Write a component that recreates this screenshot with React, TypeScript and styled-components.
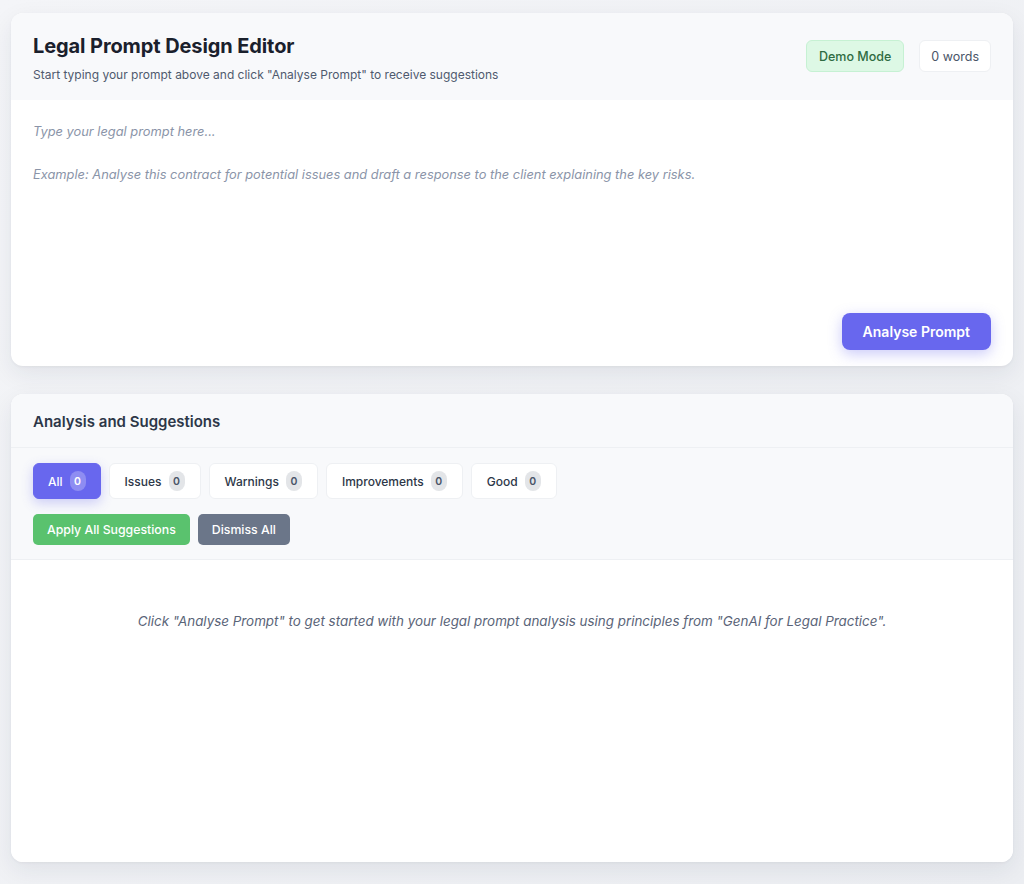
import React from "react";
import styled, { createGlobalStyle } from "styled-components";

const Global = createGlobalStyle`
  html, body { margin: 0; padding: 0; }
  body {
    background: linear-gradient(135deg, #f4f5f8 0%, #eceef2 100%);
    font-family: Inter, "Noto Sans", sans-serif;
    color: #1f2937;
    min-height: 884px;
  }
  * { box-sizing: border-box; }
`;

const Page = styled.div`
  padding: 13px 11px 22px 11px;
  display: flex;
  flex-direction: column;
  gap: 28px;
`;

const Card = styled.section<{ $h: number }>`
  background: #ffffff;
  border-radius: 12px;
  box-shadow: 0 8px 24px rgba(30, 41, 59, 0.08), 0 1px 3px rgba(30, 41, 59, 0.05);
  overflow: hidden;
  display: flex;
  flex-direction: column;
  height: ${(p) => p.$h}px;
`;

const EditorHeader = styled.header`
  background: #f8f9fb;
  height: 87px;
  padding: 20px 22px 0 22px;
  display: flex;
  justify-content: space-between;
  align-items: flex-start;
`;

const TitleBlock = styled.div`
  display: flex;
  flex-direction: column;
`;

const Title = styled.h1`
  margin: 0;
  font-size: 20px;
  font-weight: 700;
  color: #1a202c;
  line-height: 26px;
  letter-spacing: -0.1px;
`;

const Subtitle = styled.p`
  margin: 8px 0 0 0;
  font-size: 12px;
  color: #4f5a6e;
  line-height: 16px;
`;

const Badges = styled.div`
  display: flex;
  gap: 15px;
  margin-top: 7px;
`;

const Badge = styled.span<{ $variant: "demo" | "plain" }>`
  height: 32px;
  padding: 0 ${(p) => (p.$variant === "demo" ? 12 : 11)}px;
  display: inline-flex;
  align-items: center;
  border-radius: 6px;
  font-size: 12.5px;
  border: 1px solid ${(p) => (p.$variant === "demo" ? "#c6f1d3" : "#eef0f3")};
  background: ${(p) => (p.$variant === "demo" ? "#ddf8e5" : "#ffffff")};
  color: ${(p) => (p.$variant === "demo" ? "#2f6b42" : "#4a5568")};
  font-weight: ${(p) => (p.$variant === "demo" ? 500 : 400)};
`;

const EditorBody = styled.div`
  flex: 1;
  display: flex;
  flex-direction: column;
  padding: 21px 22px 16px 22px;
`;

const PromptArea = styled.textarea`
  flex: 1;
  border: none;
  outline: none;
  resize: none;
  padding: 0;
  font-family: Inter, "Noto Sans", sans-serif;
  font-size: 12.85px;
  line-height: 21.5px;
  color: #1f2937;
  background: transparent;
  &::placeholder {
    color: #8a94a8;
    font-style: italic;
  }
`;

const EditorFooter = styled.div`
  display: flex;
  justify-content: flex-end;
`;

const PrimaryButton = styled.button`
  height: 37px;
  padding: 0 21px;
  border: none;
  border-radius: 8px;
  background: #6867ee;
  color: #ffffff;
  font-family: Inter, "Noto Sans", sans-serif;
  font-size: 14px;
  font-weight: 600;
  box-shadow: 0 4px 14px rgba(104, 103, 238, 0.35);
  cursor: pointer;
`;

const AnalysisHeader = styled.header`
  background: #f8f9fb;
  height: 54px;
  padding: 2px 22px 0 22px;
  display: flex;
  align-items: center;
  border-bottom: 1px solid #eef0f3;
`;

const SectionTitle = styled.h2`
  margin: 0;
  font-size: 15px;
  font-weight: 600;
  color: #2d3748;
`;

const Controls = styled.div`
  background: #f8f9fb;
  padding: 15px 22px 14px 22px;
  border-bottom: 1px solid #eef0f3;
  display: flex;
  flex-direction: column;
  gap: 15px;
`;

const Tabs = styled.div`
  display: flex;
  gap: 8px;
`;

const Tab = styled.button<{ $active?: boolean }>`
  height: 36px;
  padding: 0 ${(p) => (p.$active ? 14 : 15)}px;
  display: inline-flex;
  align-items: center;
  gap: 7px;
  border-radius: 6px;
  border: 1px solid ${(p) => (p.$active ? "#6867ee" : "#eef0f3")};
  background: ${(p) => (p.$active ? "#6867ee" : "#ffffff")};
  color: ${(p) => (p.$active ? "#ffffff" : "#2d3748")};
  font-family: Inter, "Noto Sans", sans-serif;
  font-size: 12px;
  font-weight: 500;
  box-shadow: ${(p) => (p.$active ? "0 4px 12px rgba(104,103,238,0.3)" : "none")};
  cursor: pointer;
`;

const Count = styled.span<{ $active?: boolean }>`
  min-width: 16px;
  height: 20px;
  padding: 0 4px;
  border-radius: 10px;
  display: inline-flex;
  align-items: center;
  justify-content: center;
  font-size: 10.5px;
  font-weight: 600;
  background: ${(p) => (p.$active ? "rgba(255,255,255,0.25)" : "#e3e5e8")};
  color: ${(p) => (p.$active ? "#ffffff" : "#4a5568")};
`;

const Actions = styled.div`
  display: flex;
  gap: 8px;
`;

const ActionButton = styled.button<{ $tone: "green" | "gray" }>`
  height: 31px;
  padding: 0 14px;
  border: none;
  border-radius: 5px;
  background: ${(p) => (p.$tone === "green" ? "#5ac26e" : "#6b7689")};
  color: #ffffff;
  font-family: Inter, "Noto Sans", sans-serif;
  font-size: 12.3px;
  font-weight: 500;
  cursor: pointer;
`;

const Results = styled.div`
  flex: 1;
  background: #ffffff;
  padding: 52px 22px;
  display: flex;
  justify-content: center;
`;

const EmptyText = styled.p`
  margin: 0;
  font-size: 13.4px;
  font-style: italic;
  color: #5a6478;
  line-height: 18px;
`;

const tabs = [
  { label: "All", count: 0, active: true },
  { label: "Issues", count: 0 },
  { label: "Warnings", count: 0 },
  { label: "Improvements", count: 0 },
  { label: "Good", count: 0 },
];

export default function App() {
  return (
    <>
      <Global />
      <Page>
        <Card $h={353}>
          <EditorHeader>
            <TitleBlock>
              <Title>Legal Prompt Design Editor</Title>
              <Subtitle>
                Start typing your prompt above and click "Analyse Prompt" to receive suggestions
              </Subtitle>
            </TitleBlock>
            <Badges>
              <Badge $variant="demo">Demo Mode</Badge>
              <Badge $variant="plain">0 words</Badge>
            </Badges>
          </EditorHeader>
          <EditorBody>
            <PromptArea
              placeholder={
                "Type your legal prompt here...\n\nExample: Analyse this contract for potential issues and draft a response to the client explaining the key risks."
              }
            />
            <EditorFooter>
              <PrimaryButton>Analyse Prompt</PrimaryButton>
            </EditorFooter>
          </EditorBody>
        </Card>
        <Card $h={468}>
          <AnalysisHeader>
            <SectionTitle>Analysis and Suggestions</SectionTitle>
          </AnalysisHeader>
          <Controls>
            <Tabs>
              {tabs.map((t) => (
                <Tab key={t.label} $active={t.active}>
                  {t.label}
                  <Count $active={t.active}>{t.count}</Count>
                </Tab>
              ))}
            </Tabs>
            <Actions>
              <ActionButton $tone="green">Apply All Suggestions</ActionButton>
              <ActionButton $tone="gray">Dismiss All</ActionButton>
            </Actions>
          </Controls>
          <Results>
            <EmptyText>
              Click "Analyse Prompt" to get started with your legal prompt analysis using principles from "GenAI for Legal Practice".
            </EmptyText>
          </Results>
        </Card>
      </Page>
    </>
  );
}
